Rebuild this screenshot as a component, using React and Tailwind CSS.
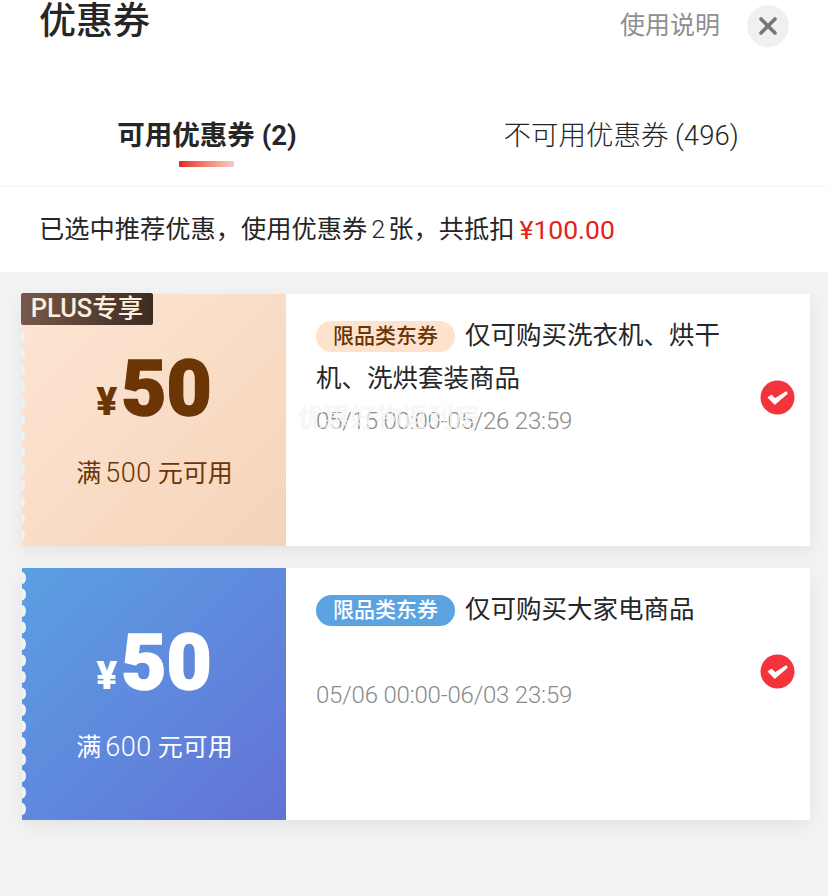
import React from "react";

const CJK = { fontFamily: '"Roboto","Noto Sans CJK SC",sans-serif' };

function Scallop({ color, ry, rx }) {
  return (
    <svg className="absolute left-0 top-0 h-full w-[6px]" viewBox="0 0 6 252">
      {Array.from({ length: 15 }).map((_, i) => (
        <ellipse key={i} cx="0" cy={10 + i * 16.5} rx={rx} ry={ry} fill={color} />
      ))}
    </svg>
  );
}

function Check() {
  return (
    <svg className="w-[35px] h-[35px] shrink-0" viewBox="0 0 35 35">
      <circle cx="17.5" cy="17.5" r="17" fill="#f5333b" />
      <path d="M8.5 17.5 L14.8 24 L27 13.4 L26 12 L15 19 L11.6 15.4 Z" fill="#fff" stroke="#fff" strokeWidth="1.4" strokeLinejoin="round" />
    </svg>
  );
}

function Coupon({ variant, amount, digits, desc, date, plus }) {
  const blue = variant === "blue";
  return (
    <div className="relative flex h-[252px] w-[788px] bg-white shadow-[0_6px_16px_rgba(0,0,0,0.06)]">
      <div className={`relative flex w-[264px] shrink-0 flex-col items-center ${blue ? "bg-gradient-to-br from-[#5a9fe3] to-[#6272d6] text-white" : "bg-gradient-to-br from-[#fde6d4] to-[#f5d3b9] text-[#6b3505]"}`}>
        <Scallop color="#f2f2f2" rx={blue ? 4 : 3} ry={blue ? 6 : 5} />
        {plus && (
          <div className="absolute left-[-1px] top-[-1px] flex h-[32px] w-[132px] items-center justify-center rounded-[2px] bg-gradient-to-r from-[#77594a] to-[#3d2b22] text-[25.5px] font-medium leading-none text-[#fdeede]">
            PLUS专享
          </div>
        )}
        <div className="mt-[55px] flex h-[80px] items-end">
          <span className="mb-[7px] mr-[4px] text-[39px] font-black leading-none" style={{ fontFamily: '"Roboto",sans-serif' }}>¥</span>
          <span className="text-[78px] font-black leading-[80px] [-webkit-text-stroke:1.5px_currentColor]" style={{ fontFamily: '"Roboto",sans-serif' }}>{amount}</span>
        </div>
        <div className="mt-[26px] flex items-baseline pl-[1px] text-[25px] leading-[36px]">
          <span>满</span>
          <span className="ml-[4px] mr-[6px] text-[27px] font-light tracking-[0.5px]">{digits}</span>
          <span>元可用</span>
        </div>
      </div>
      <div className="flex min-w-0 flex-1 items-start pl-[30px] pr-[15px] pt-[20px]">
        <div className="w-[412px]">
          <div className="text-[25.5px] leading-[43px] text-[#262626]">
            <span className={`mr-[10px] inline-flex h-[31px] w-[139px] items-center justify-center rounded-full align-[1px] text-[21px] font-medium leading-none ${blue ? "bg-[#5ca3e2] text-white" : "bg-[#fde3cd] text-[#6b3505]"}`}>限品类东券</span>
            {desc}
          </div>
          <div className={`text-[24px] font-light leading-[32px] tracking-[-0.2px] text-[#8a8a8a] ${blue ? "mt-[48px]" : "mt-[5px]"}`}>{date}</div>
        </div>
        <div className="ml-auto mt-[66px]"><Check /></div>
      </div>
    </div>
  );
}

export default function App() {
  return (
    <div className="relative h-[896px] w-[828px] overflow-hidden bg-[#f2f2f2]" style={CJK}>
      <div className="bg-white">
        <div className="flex h-[102px] items-start justify-between pl-[39px] pr-[39px]">
          <div className="text-[37px] font-medium leading-[44px] text-[#262626]">优惠券</div>
          <div className="flex items-center pt-[5px]">
            <span className="text-[25px] leading-[42px] text-[#8f8f8f]">使用说明</span>
            <span className="ml-[27px] flex h-[42px] w-[42px] items-center justify-center rounded-full bg-[#f0f0f0]">
              <svg width="20" height="20" viewBox="0 0 20 20"><path d="M3 3 L17 17 M17 3 L3 17" stroke="#777" strokeWidth="3.6" strokeLinecap="round" /></svg>
            </span>
          </div>
        </div>
        <div className="flex h-[85px] border-b border-[#f5f5f5]">
          <div className="flex h-full w-[414px] flex-col items-center pt-[14px]">
            <span className="text-[27.5px] font-bold leading-[40px] text-[#262626]">可用优惠券 (2)</span>
            <span className="mr-[2px] mt-[5px] h-[6px] w-[55px] rounded-[1px] bg-gradient-to-r from-[#e2231a] to-[#f9c9c4]" />
          </div>
          <div className="flex h-full w-[414px] flex-col items-center pt-[14px]">
            <span className="text-[27.5px] font-light leading-[40px] text-[#262626]">不可用优惠券 (496)</span>
          </div>
        </div>
        <div className="flex h-[85px] items-center whitespace-pre pl-[39px] text-[25.25px] text-[#262626]">
          <span>已选中推荐优惠，使用优惠券</span>
          <span className="ml-[4px] mr-[3px] font-light">2</span>
          <span>张，共抵扣</span>
          <span className="ml-[5px] text-[26.5px] text-[#e2231a]">¥100.00</span>
        </div>
      </div>
      <div className="flex flex-col gap-[22px] pl-[22px] pt-[22px]">
        <Coupon variant="peach" amount="50" digits="500" desc="仅可购买洗衣机、烘干机、洗烘套装商品" date="05/15 00:00-05/26 23:59" plus />
        <Coupon variant="blue" amount="50" digits="600" desc="仅可购买大家电商品" date="05/06 00:00-06/03 23:59" />
      </div>
      <div className="absolute left-[298px] top-[402px] text-[26px] leading-[32px] text-white/80 [text-shadow:0_0_1px_rgba(0,0,0,0.15)]">优惠好物返利房</div>
    </div>
  );
}
